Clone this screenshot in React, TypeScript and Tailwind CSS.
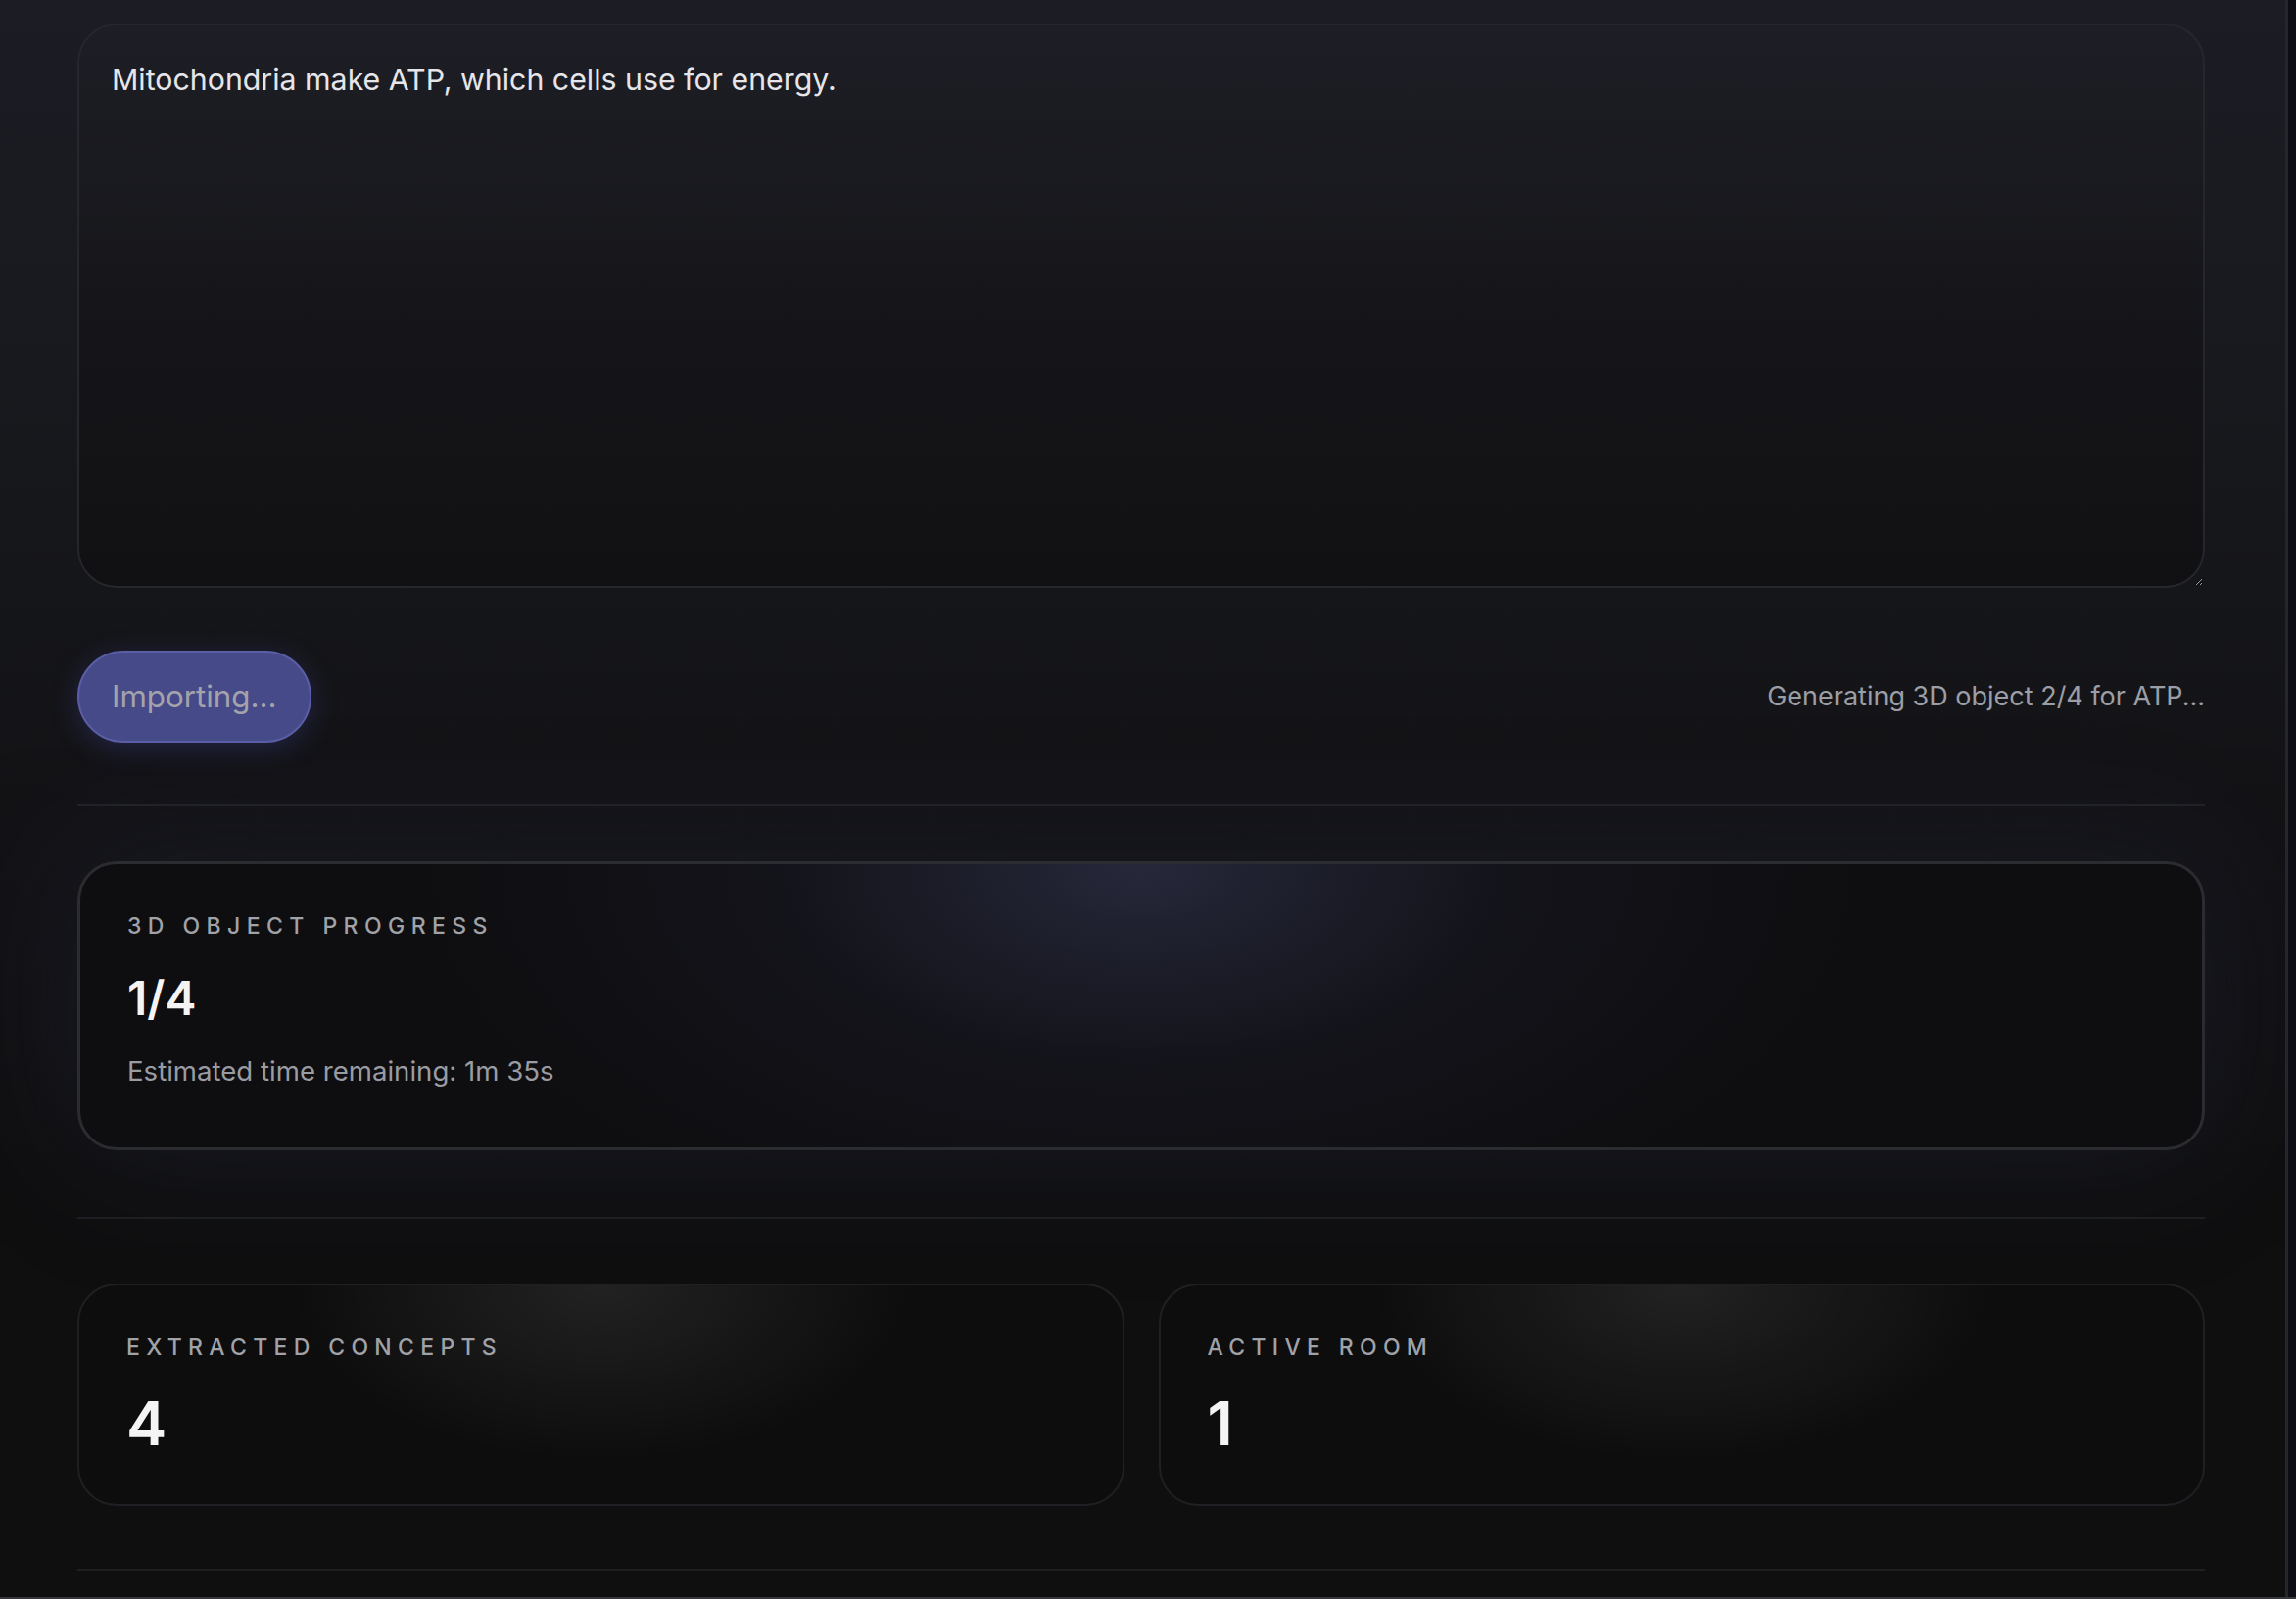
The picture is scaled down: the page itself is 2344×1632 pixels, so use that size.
import React from "react";

const font = { fontFamily: 'Inter, "Noto Sans", "Liberation Sans", sans-serif' };

function StatCard({ label, value }: { label: string; value: string }) {
  return (
    <div className="rounded-[40px] border-2 border-[#1f2023] bg-[#0d0d0e] bg-[radial-gradient(ellipse_320px_180px_at_50%_0%,rgba(255,255,255,0.085),rgba(255,255,255,0)_100%)] px-[48px] pt-[47px] pb-[51px]">
      <div className="text-[23px] leading-[33px] font-medium uppercase tracking-[0.275em] text-[#a0a2a8]">{label}</div>
      <div className="mt-[30px] text-[62px] leading-[62px] font-semibold text-[#f4f4f5]">{value}</div>
    </div>
  );
}

export default function App() {
  return (
    <div style={font} className="flex h-[1632px] w-full overflow-hidden border-b-2 border-[#37383b] bg-[#0f0f10]">
      <main className="flex-1 bg-[linear-gradient(180deg,#1c1d24_0%,#17181c_28%,#131316_50%,#0f0f10_75%,#0f0f10_100%)] pl-[79px] pr-[82px] pt-[24px]">
        <textarea
          readOnly
          defaultValue="Mitochondria make ATP, which cells use for energy."
          className="block h-[576px] w-full resize-y rounded-[40px] border-2 border-[#26272d] bg-[linear-gradient(180deg,rgba(30,31,38,0.8)_0%,rgba(22,22,26,0.85)_45%,rgba(16,16,18,0.9)_100%)] px-[33px] pt-[33px] text-[30.3px] leading-[45px] text-[#e6e6ea] outline-none"
          style={font}
        />
        <div className="mt-[64px] flex items-center justify-between">
          <button className="h-[94px] rounded-full border-2 border-[#5a5ea6] bg-[#474a89] px-[33px] text-[31.3px] text-[#a3a3ab] shadow-[0_6px_28px_rgba(80,84,190,0.28)]">
            Importing...
          </button>
          <div className="text-[27px] text-[#9c9ea6]">Generating 3D object 2/4 for ATP...</div>
        </div>
        <div className="mt-[63px] h-[2px] bg-[#222327]" />

        <div className="mt-[56px] rounded-[40px] border-[3px] border-[#2b2c30] bg-[#0e0e10] bg-[radial-gradient(ellipse_780px_430px_at_50%_0%,rgba(58,60,92,0.55),rgba(30,31,48,0.28)_50%,rgba(14,14,16,0)_100%)] px-[48px] pt-[47px] pb-[57px] shadow-[0_0_140px_rgba(40,42,70,0.35)]">
          <div className="text-[23px] leading-[33px] font-medium uppercase tracking-[0.28em] text-[#a0a2a8]">3D Object Progress</div>
          <div className="mt-[33px] text-[48px] leading-[48px] font-semibold text-[#f4f4f5]">1/4</div>
          <div className="mt-[29px] text-[27.6px] leading-[42px] text-[#9a9ca3]">Estimated time remaining: 1m 35s</div>
        </div>
        <div className="mt-[68px] h-[2px] bg-[#1e1f22]" />

        <div className="mt-[66px] grid grid-cols-2 gap-[35px]">
          <StatCard label="Extracted Concepts" value="4" />
          <StatCard label="Active Room" value="1" />
        </div>
        <div className="mt-[64px] h-[2px] bg-[#1e1f21]" />
      </main>
      <div className="w-[11px] border-l-[3px] border-[#25262b] bg-[#0d0e15]" />
    </div>
  );
}
